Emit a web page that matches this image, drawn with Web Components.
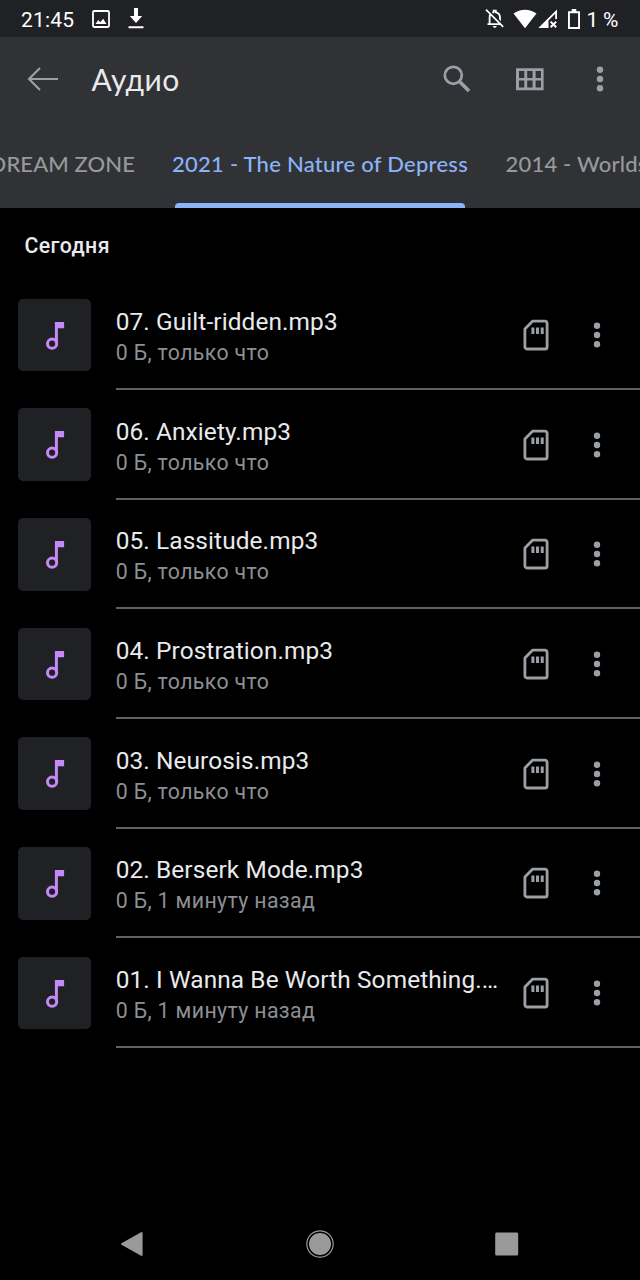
<!DOCTYPE html>
<html lang="ru">
<head>
<meta charset="utf-8">
<title>Аудио</title>
<style>
html,body{margin:0;background:#000}
body{width:640px;height:1280px;overflow:hidden;font-family:Roboto,"Liberation Sans",sans-serif}
</style>
</head>
<body>
<audio-screen></audio-screen>
<script>
const define = (name, html, setup) => {
  const template = document.createElement('template');
  template.innerHTML = html;
  customElements.define(name, class extends HTMLElement {
    connectedCallback() {
      if (this.shadowRoot) return;
      this.attachShadow({mode: 'open'}).append(template.content.cloneNode(true));
      if (setup) setup(this, this.shadowRoot);
    }
  });
};

// name: [width, height, markup]; one unit is one pixel
const ICONS = {
  image: [18, 18, '<rect x="1" y="1" width="16" height="16" rx="1.2" fill="none" stroke="currentColor" stroke-width="1.8"/><path d="M3.5 14 6.3 10 8.2 12.2 11.2 8.8 14.5 14Z"/>'],
  download: [16, 21, '<path d="M6 0h4v8h4.2L8 15 1.8 8H6ZM.5 18.3h15v2H.5Z"/>'],
  bell: [20, 21, '<path d="M4.6 15.9V9.4C4.6 6.8 6.3 5 8.6 4.4V2.7h2.2v1.7c2.7.6 4.2 2.5 4.2 5v6.4" fill="none" stroke="currentColor" stroke-width="1.8"/><path d="M2.5 15.2h14V17h-14ZM7.9 18h3.8c0 2.4-3.8 2.4-3.8 0Z"/><path d="M2.2 1 20 18.8" stroke="#202124" stroke-width="2"/><path d="M1 1.7 18.2 18.9" stroke="currentColor" stroke-width="1.7"/>'],
  wifi: [24, 20, '<path d="M.5 4.6C7.2-.7 16.8-.7 23.5 4.6L12 19.3Z"/>'],
  signal: [20, 20, '<path d="M19 .5V10h-1.8V4.7L10.5 11.4V19H.3Z"/><path d="m12.6 12.6 5.6 5.6m0-5.6-5.6 5.6" stroke="currentColor" stroke-width="2"/>'],
  battery: [12, 20, '<path d="M3.7 0h4.6v2.2H12V20H0V2.2h3.7ZM1.9 4.2V18.1h8.2V4.2Z" fill-rule="evenodd"/>'],
  back: [32, 24, '<path d="M13 1 2 12 13 23M2 12H31" fill="none" stroke="currentColor" stroke-width="2.2"/>'],
  search: [28, 28, '<circle cx="10.3" cy="10.3" r="8.5" fill="none" stroke="currentColor" stroke-width="2.7"/><path d="m16 16 10 10" fill="none" stroke="currentColor" stroke-width="3.7"/>'],
  grid: [28, 23, '<path fill-rule="evenodd" d="M0 .3h27.6v22H0ZM3 3v7h5.3V3Zm8.2 0v7h5.4V3Zm8.4 0v7H25V3ZM3 12.6v7h5.3v-7Zm8.2 0v7h5.4v-7Zm8.4 0v7H25v-7Z"/>'],
  more: [8, 26, '<circle cx="4" cy="3.7" r="3.2"/><circle cx="4" cy="13" r="3.2"/><circle cx="4" cy="22.3" r="3.2"/>'],
  note: [20, 29, '<path d="M9.9 1h9.2v6.2h-6.2v15h-3Z"/><circle cx="7.1" cy="22.7" r="4.6" fill="none" stroke="currentColor" stroke-width="3"/>'],
  sd: [26, 32, '<path d="M9.5 2.2H22a2.1 2.1 0 0 1 2.1 2.1v23.6a2.1 2.1 0 0 1-2.1 2.1H4a2.1 2.1 0 0 1-2.1-2.1V10Z" fill="none" stroke="currentColor" stroke-width="2.8" stroke-linejoin="round"/><path d="M8.4 8.6h3V15h-3Zm4.6 0h3V15h-3Zm4.7 0h3V15h-3Z"/>'],
  navback: [24, 26, '<path d="M2 13 21.6 2V24Z" stroke="currentColor" stroke-width="2" stroke-linejoin="round"/>'],
  navhome: [28, 28, '<circle cx="14" cy="14" r="11"/><circle cx="14" cy="14" r="13.2" fill="none" stroke="currentColor" stroke-width="1.2"/>'],
  navrecent: [24, 24, '<rect x=".2" y=".5" width="23" height="23" rx="1.5"/>']
};

define('ui-icon', '<style>:host{display:block;flex:none}svg{display:block;fill:currentColor;overflow:visible}</style>', (el, root) => {
  const [w, h, body] = ICONS[el.getAttribute('name')];
  root.innerHTML += `<svg width="${w}" height="${h}" viewBox="0 0 ${w} ${h}" aria-hidden="true">${body}</svg>`;
});

define('status-bar', `<style>
:host{display:flex;align-items:center;height:37px;box-sizing:border-box;padding:0 20px 0 21px;background:#202124;color:#fff;font-size:21px}
.time{width:71px;letter-spacing:.2px;white-space:nowrap;padding-top:2px}
.dl{margin-left:18px}
.bell{margin-left:auto}
.wifi{margin-left:8px}.signal{margin-left:1px}.battery{margin-left:10px}
.pct{margin-left:6.5px;width:33.5px;white-space:nowrap;padding-top:2px;letter-spacing:-.3px}
</style><span class="time">21:45</span><ui-icon name="image"></ui-icon><ui-icon class="dl" name="download"></ui-icon>
<ui-icon class="bell" name="bell"></ui-icon><ui-icon class="wifi" name="wifi"></ui-icon><ui-icon class="signal" name="signal"></ui-icon><ui-icon class="battery" name="battery"></ui-icon><span class="pct">1 %</span>`);

define('app-bar', `<style>
:host{display:flex;align-items:center;height:85px;box-sizing:border-box;padding:0 36px 1px 27px;background:#313235;color:#9aa0a6}
h1{margin:0 auto 1px 32.5px;font:400 30px Lato,Roboto,sans-serif;color:#e8eaed;letter-spacing:.45px;white-space:nowrap}
.grid{margin:0 52px 0 45px}
</style><ui-icon name="back"></ui-icon><h1><slot></slot></h1><ui-icon name="search"></ui-icon><ui-icon class="grid" name="grid"></ui-icon><ui-icon name="more"></ui-icon>`);

define('tab-item', `<style>
:host{display:flex;flex-direction:column;justify-content:space-between;flex:none;height:85.5px;color:#97999d;font:500 22px Lato,Roboto,sans-serif;white-space:nowrap}
span{display:block;line-height:30px;margin-top:27px}
i{display:block;height:5px;margin:0 3px;border-radius:4px 4px 0 0}
:host([active]){color:#8ab4f8}
:host([active]) i{background:#8ab4f8}
</style><span><slot></slot></span><i></i>`);

define('tab-strip', `<style>
:host{display:flex;gap:37px;height:85.5px;overflow:hidden;background:#313235}
.prev{width:135px;display:flex;justify-content:flex-end;flex:none}
.current{width:296px;letter-spacing:.26px}
.next{letter-spacing:.2px;margin-left:.5px}
</style><div class="prev"><tab-item style="letter-spacing:.1px">DREAM ZONE</tab-item></div><tab-item class="current" active>2021 - The Nature of Depress</tab-item><tab-item class="next">2014 - Worlds</tab-item>`);

define('track-row', `<style>
:host{display:flex;height:109.67px;padding-left:18.3px;box-sizing:border-box;color:#9aa0a6}
.thumb{display:grid;place-items:center;flex:none;width:72.7px;height:72.7px;margin-top:18.3px;border-radius:5px;background:#202124;color:#c58af9}
.body{display:flex;flex:1;min-width:0;margin-left:24.7px;border-bottom:2px solid #5f6165;box-sizing:border-box;height:109.4px}
.text{width:384px;padding-top:25.5px;flex:none}
.title{font-size:24.4px;line-height:31px;letter-spacing:.11px;color:#e8eaed;overflow:hidden;text-overflow:ellipsis;white-space:nowrap}
.sub{font-size:21.3px;line-height:31.3px;letter-spacing:.36px;color:#8c8f93;white-space:nowrap}
.sd{margin:38.5px 0 0 23.5px}
.more{margin:41.5px 0 0 43.7px}
</style><div class="thumb"><ui-icon name="note"></ui-icon></div><div class="body"><div class="text"><div class="title"><slot></slot></div><div class="sub"></div></div><ui-icon class="sd" name="sd"></ui-icon><ui-icon class="more" name="more"></ui-icon></div>`,
(el, root) => { root.querySelector('.sub').textContent = el.getAttribute('meta'); });

define('nav-bar', `<style>
:host{display:flex;align-items:center;justify-content:space-between;height:73px;padding:0 121px 0 120px;color:#9a9a9a}
</style><ui-icon name="navback"></ui-icon><ui-icon name="navhome"></ui-icon><ui-icon name="navrecent"></ui-icon>`);

define('audio-screen', `<style>
:host{display:flex;flex-direction:column;width:640px;height:1280px;background:#000;overflow:hidden}
h2{margin:0;height:73px;line-height:76px;padding-left:24.4px;box-sizing:border-box;font-size:21.3px;font-weight:500;color:#e8eaed;letter-spacing:.45px}
main{flex:1}
</style>
<status-bar></status-bar><app-bar>Аудио</app-bar><tab-strip></tab-strip>
<main><h2>Сегодня</h2>
<track-row meta="0 Б, только что">07. Guilt-ridden.mp3</track-row>
<track-row meta="0 Б, только что">06. Anxiety.mp3</track-row>
<track-row meta="0 Б, только что">05. Lassitude.mp3</track-row>
<track-row meta="0 Б, только что">04. Prostration.mp3</track-row>
<track-row meta="0 Б, только что">03. Neurosis.mp3</track-row>
<track-row meta="0 Б, 1 минуту назад">02. Berserk Mode.mp3</track-row>
<track-row meta="0 Б, 1 минуту назад">01. I Wanna Be Worth Something.mp3</track-row>
</main><nav-bar></nav-bar>`);
</script>
</body>
</html>
